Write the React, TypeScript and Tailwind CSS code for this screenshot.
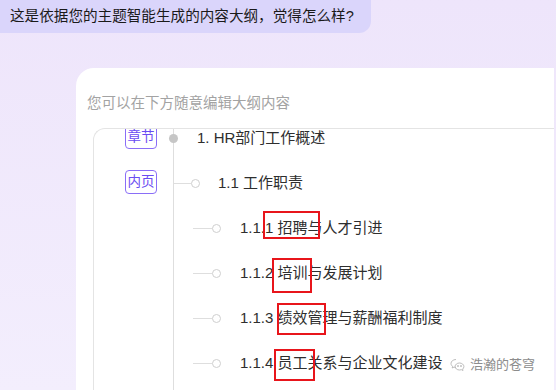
import React from "react";

const font = "font-['Liberation_Sans','Noto_Sans_CJK_SC',sans-serif]";

const Tag = ({ label }: { label: string }) => (
    <div className="w-[32px] h-[24px] rounded-[4px] border border-[#8a6ef7] text-[#6a4cf2] text-[13.5px] leading-none flex items-center justify-center">
        {label}
    </div>
);

const Circle = () => (
    <div className="w-[9px] h-[9px] rounded-full border border-[#cfcfcf] bg-white shrink-0" />
);

const marks: Record<string, { left: number; top: number; w: number; h: number }> = {
    "1.1.1": { left: 89, top: 5, w: 57, h: 28 },
    "1.1.2": { left: 98, top: 7, w: 40, h: 35 },
    "1.1.3": { left: 103, top: 7, w: 49, h: 32 },
    "1.1.4": { left: 100, top: 8, w: 41, h: 32 },
};

const items = [
    { no: "1.1.1", text: "招聘与人才引进" },
    { no: "1.1.2", text: "培训与发展计划" },
    { no: "1.1.3", text: "绩效管理与薪酬福利制度" },
    { no: "1.1.4", text: "员工关系与企业文化建设" },
];

const WeChat = () => (
    <svg width="15" height="14" viewBox="0 0 15 14" fill="none" stroke="#b5b5b5" strokeWidth="0.9">
        <path d="M6 1.5c-3 0-5 1.9-5 4 0 1.2.6 2.2 1.6 2.9L2.2 10l1.8-.9c.6.2 1.2.3 2 .3" />
        <path d="M9.5 5c2.5 0 4.4 1.6 4.4 3.6 0 1-.5 1.9-1.3 2.5l.4 1.4-1.6-.8c-.6.2-1.2.3-1.9.3-2.5 0-4.4-1.6-4.4-3.5S7 5 9.5 5z" />
        <circle cx="8" cy="8" r="0.5" fill="#b5b5b5" />
        <circle cx="11" cy="8" r="0.5" fill="#b5b5b5" />
    </svg>
);

export default function App() {
    return (
        <div className={`relative w-[556px] h-[390px] overflow-hidden flex flex-col bg-gradient-to-b from-[#eee5fb] to-[#f3eefd] ${font}`}>
            <div className="w-[371px] h-[33px] shrink-0 bg-[#dad5fb] rounded-br-[12px] pl-[10px] flex items-center text-[14.6px] text-[#1a1a1a]">
                这是依据您的主题智能生成的内容大纲，觉得怎么样?
            </div>

            <div className="flex-1 ml-[76px] mr-[2px] mt-[35px] bg-white rounded-tl-[18px] flex flex-col">
                <div className="pl-[11px] pt-[25px] h-[60px] text-[14.5px] text-[#a3a3a3]">
                    您可以在下方随意编辑大纲内容
                </div>

                <div className="ml-[17px] flex-1 border-t border-l border-[#e4e4e4] rounded-tl-[12px] overflow-hidden flex">
                    <div className="w-[79px] shrink-0 pl-[31px] -mt-[4px] flex flex-col gap-[21px]">
                        <Tag label="章节" />
                        <Tag label="内页" />
                    </div>

                    <div className="flex-1 border-l border-[#dedede] -mt-[13px] flex flex-col text-[15px] text-[#2e2e2e]">
                        <div className="h-[45px] flex items-center">
                            <div className="w-[9px] h-[9px] rounded-full bg-[#c6c6c6] -ml-[5px] shrink-0" />
                            <span className="ml-[19px]">1. HR部门工作概述</span>
                        </div>
                        <div className="h-[45px] flex items-center">
                            <div className="w-[17px] h-px bg-[#dedede]" />
                            <Circle />
                            <span className="ml-[18px]">1.1 工作职责</span>
                        </div>
                        {items.map((it) => {
                            const m = marks[it.no];
                            return (
                                <div key={it.no} className="relative h-[45px] flex items-center">
                                    <div className="ml-[19px] w-[19px] h-px bg-[#dedede]" />
                                    <Circle />
                                    <span className="ml-[19px] whitespace-nowrap">
                                        {it.no} {it.text}
                                    </span>
                                    <div
                                        className="absolute border-2 border-[#e8151b]"
                                        style={{ left: m.left, top: m.top, width: m.w, height: m.h }}
                                    />
                                </div>
                            );
                        })}
                    </div>
                </div>
            </div>

            <div className="absolute left-[450px] top-[355px] flex items-center gap-[5px] text-[13px] text-[#8c8c8c]">
                <WeChat />
                <span>浩瀚的苍穹</span>
            </div>
        </div>
    );
}
